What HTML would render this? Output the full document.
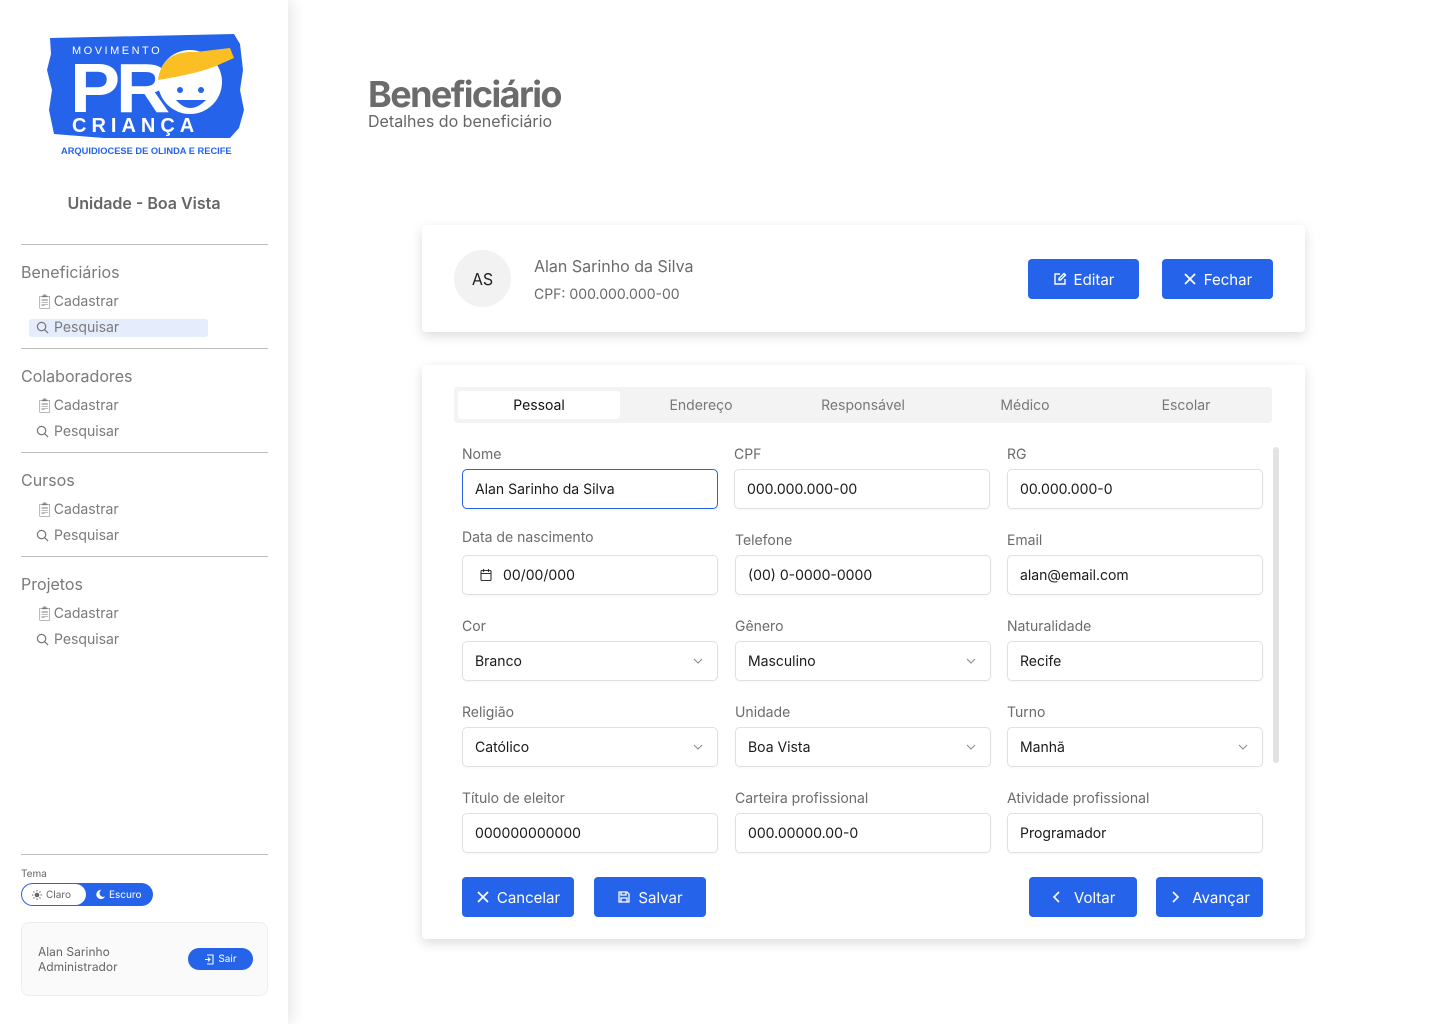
<!DOCTYPE html>
<html><head><meta charset="utf-8">
<style>
*{box-sizing:border-box;margin:0;padding:0}
body{width:1440px;height:1024px;position:relative;background:#fff;font-family:"Inter","Liberation Sans",sans-serif;overflow:hidden;color:#222}
.a{position:absolute}
#side{left:0;top:0;width:288px;height:1024px;background:#fff;box-shadow:4px 0 14px rgba(0,0,0,0.10)}
.hr{position:absolute;left:21px;width:247px;height:1px;background:#bdbdbd}
.sh{position:absolute;left:21px;font-size:16px;color:#7a7a7a}
.si{position:absolute;left:36px;font-size:14px;color:#7a7a7a;display:flex;align-items:center;gap:5px}
.card{position:absolute;background:#fff;border-radius:4px;box-shadow:0 4px 12px rgba(0,0,0,0.14)}
.btn{position:absolute;height:40px;background:#2563eb;color:#fff;border-radius:4px;font-size:15px;display:flex;align-items:center;justify-content:center;gap:7px}
.lbl{position:absolute;font-size:14px;color:#6b6b6b}
.inp{position:absolute;width:256px;height:40px;border:1px solid #e0e0e0;border-radius:5px;font-size:14px;color:#1a1a1a;padding-left:12px;display:flex;align-items:center;box-shadow:0 1px 2px rgba(0,0,0,0.04)}
.chev{position:absolute;right:14px;top:14px}
.tab{position:absolute;top:391px;height:28px;font-size:14px;color:#777;display:flex;align-items:center;justify-content:center;width:162px}
</style></head><body>
<div id="side" class="a">
  <svg class="a" style="left:44px;top:30px" width="202" height="130" viewBox="0 0 202 130">
    <path d="M6 8 L190 4 L196 14 L199 40 L196 60 L200 80 L195 98 L186 108 L60 108 L10 104 L5 80 L8 60 L3 40 L7 24 Z" fill="#2563eb"/>
    <text x="28" y="24" font-family="Liberation Sans" font-size="11" fill="#fff" letter-spacing="2.5">MOVIMENTO</text>
    <text x="26" y="82" font-family="Liberation Sans" font-weight="bold" font-size="70" fill="#fff" letter-spacing="-4" textLength="96" lengthAdjust="spacingAndGlyphs">PR</text>
    <circle cx="146" cy="52" r="32" fill="#fff"/>
    <path d="M114 50 Q118 20 152 22 L186 18 L190 28 L172 36 Q152 44 114 50Z" fill="#fbbf24"/>
    <circle cx="136" cy="60" r="3" fill="#2563eb"/><circle cx="157" cy="60" r="3" fill="#2563eb"/>
    <path d="M132 70 Q146 86 162 70 Z" fill="#2563eb"/>
    <text x="28" y="102" font-family="Liberation Sans" font-weight="bold" font-size="20" fill="#fff" letter-spacing="5">CRIANÇA</text>
    <text x="17" y="124" font-family="Liberation Sans" font-weight="bold" font-size="9.3" fill="#2563eb">ARQUIDIOCESE DE OLINDA E RECIFE</text>
  </svg>
  <div class="a" style="left:0;width:288px;top:193px;text-align:center;font-size:16px;font-weight:600;color:#666">Unidade - Boa Vista</div>
  <div class="hr" style="top:244px"></div>
  <div class="sh" style="top:262px">Beneficiários</div>
  <div class="si" style="top:293px">&#x1F4CB;&#xFE0E;Cadastrar</div>
  <div class="a" style="left:29px;top:319px;width:179px;height:18px;background:#e5ecfb;border-radius:3px"></div>
  <div class="si" style="top:319px"><svg width="13" height="13" viewBox="0 0 14 14"><circle cx="6" cy="6" r="4.5" fill="none" stroke="#777" stroke-width="1.3"/><path d="M9.5 9.5 L13 13" stroke="#777" stroke-width="1.3"/></svg>Pesquisar</div>
  <div class="hr" style="top:348px"></div>
  <div class="sh" style="top:366px">Colaboradores</div>
  <div class="si" style="top:397px">&#x1F4CB;&#xFE0E;Cadastrar</div>
  <div class="si" style="top:423px"><svg width="13" height="13" viewBox="0 0 14 14"><circle cx="6" cy="6" r="4.5" fill="none" stroke="#777" stroke-width="1.3"/><path d="M9.5 9.5 L13 13" stroke="#777" stroke-width="1.3"/></svg>Pesquisar</div>
  <div class="hr" style="top:452px"></div>
  <div class="sh" style="top:470px">Cursos</div>
  <div class="si" style="top:501px">&#x1F4CB;&#xFE0E;Cadastrar</div>
  <div class="si" style="top:527px"><svg width="13" height="13" viewBox="0 0 14 14"><circle cx="6" cy="6" r="4.5" fill="none" stroke="#777" stroke-width="1.3"/><path d="M9.5 9.5 L13 13" stroke="#777" stroke-width="1.3"/></svg>Pesquisar</div>
  <div class="hr" style="top:556px"></div>
  <div class="sh" style="top:574px">Projetos</div>
  <div class="si" style="top:605px">&#x1F4CB;&#xFE0E;Cadastrar</div>
  <div class="si" style="top:631px"><svg width="13" height="13" viewBox="0 0 14 14"><circle cx="6" cy="6" r="4.5" fill="none" stroke="#777" stroke-width="1.3"/><path d="M9.5 9.5 L13 13" stroke="#777" stroke-width="1.3"/></svg>Pesquisar</div>
  <div class="hr" style="top:854px"></div>
  <div class="a" style="left:21px;top:868px;font-size:10px;color:#666">Tema</div>
  <div class="a" style="left:21px;top:883px;width:132px;height:23px;border-radius:12px;background:#2563eb"></div>
  <div class="a" style="left:22px;top:884px;width:64px;height:21px;border-radius:11px;background:#fff;font-size:10px;color:#666;display:flex;align-items:center;padding-left:10px;gap:4px"><svg width="10" height="10" viewBox="0 0 10 10"><circle cx="5" cy="5" r="2.3" fill="#666"/><path d="M5 0v1.5M5 8.5V10M0 5h1.5M8.5 5H10M1.5 1.5l1 1M7.5 7.5l1 1M1.5 8.5l1-1M7.5 2.5l1-1" stroke="#666" stroke-width="1"/></svg>Claro</div>
  <div class="a" style="left:95px;top:884px;height:21px;font-size:10px;color:#fff;display:flex;align-items:center;gap:3px"><svg width="11" height="11" viewBox="0 0 12 12"><path d="M7 1A5 5 0 1 0 11 8 4 4 0 0 1 7 1Z" fill="#fff"/></svg>Escuro</div>
  <div class="a" style="left:21px;top:922px;width:247px;height:74px;border:1px solid #eee;border-radius:8px;background:#fafafa"></div>
  <div class="a" style="left:38px;top:944px;font-size:12px;color:#666;line-height:15px">Alan Sarinho<br>Administrador</div>
  <div class="a" style="left:188px;top:948px;width:65px;height:22px;border-radius:11px;background:#2563eb;color:#fff;font-size:10px;display:flex;align-items:center;justify-content:center;gap:4px"><svg width="10" height="11" viewBox="0 0 10 11" fill="none" stroke="#fff" stroke-width="1.1"><path d="M3 1h6v9H3M1 5.5h5M4 3.5l2 2-2 2"/></svg>Sair</div>
</div>

<div class="a" style="left:368px;top:72px;font-size:36px;font-weight:bold;color:#6b6b6b;letter-spacing:-1.6px">Beneficiário</div>
<div class="a" style="left:368px;top:111px;font-size:16px;color:#666">Detalhes do beneficiário</div>

<div class="card" style="left:422px;top:225px;width:883px;height:107px"></div>
<div class="a" style="left:454px;top:250px;width:57px;height:57px;border-radius:50%;background:#f2f2f2;display:flex;align-items:center;justify-content:center;font-size:16px;color:#222">AS</div>
<div class="a" style="left:534px;top:256px;font-size:16px;color:#6b6b6b">Alan Sarinho da Silva</div>
<div class="a" style="left:534px;top:286px;font-size:14px;color:#6b6b6b">CPF: 000.000.000-00</div>
<div class="btn" style="left:1028px;top:259px;width:111px"><svg width="14" height="14" viewBox="0 0 14 14" fill="none" stroke="#fff" stroke-width="1.4"><path d="M7 2H2v10h10V7"/><path d="M11 1.5l1.5 1.5-5 5H6V6.5z"/></svg>Editar</div>
<div class="btn" style="left:1162px;top:259px;width:111px"><svg width="14" height="14" viewBox="0 0 14 14" stroke="#fff" stroke-width="1.8"><path d="M2 2L12 12M12 2L2 12"/></svg>Fechar</div>

<div class="card" style="left:422px;top:365px;width:883px;height:574px"></div>
<div class="a" style="left:454px;top:387px;width:818px;height:36px;background:#f3f3f3;border-radius:4px"></div>
<div class="a" style="left:458px;top:391px;width:162px;height:28px;background:#fff;border-radius:3px"></div>
<div class="tab" style="left:458px;color:#111">Pessoal</div>
<div class="tab" style="left:620px">Endereço</div>
<div class="tab" style="left:782px">Responsável</div>
<div class="tab" style="left:944px">Médico</div>
<div class="tab" style="left:1105px">Escolar</div>
<div class="a" style="left:1273px;top:447px;width:6px;height:316px;border-radius:3px;background:#e3e3e3"></div>

<div class="lbl" style="left:462px;top:446px">Nome</div>
<div class="inp" style="left:462px;top:469px;border-color:#2563eb">Alan Sarinho da Silva</div>
<div class="lbl" style="left:734px;top:446px">CPF</div>
<div class="inp" style="left:734px;top:469px">000.000.000-00</div>
<div class="lbl" style="left:1007px;top:446px">RG</div>
<div class="inp" style="left:1007px;top:469px">00.000.000-0</div>

<div class="lbl" style="left:462px;top:529px">Data de nascimento</div>
<div class="inp" style="left:462px;top:555px;padding-left:16px"><svg width="14" height="14" viewBox="0 0 14 14" fill="none" stroke="#333" stroke-width="1.1" style="margin-right:10px"><rect x="2" y="2.5" width="10" height="10" rx="1"/><path d="M2 5.5h10M4.5 1v3M9.5 1v3"/></svg>00/00/000</div>
<div class="lbl" style="left:735px;top:532px">Telefone</div>
<div class="inp" style="left:735px;top:555px">(00) 0-0000-0000</div>
<div class="lbl" style="left:1007px;top:532px">Email</div>
<div class="inp" style="left:1007px;top:555px">alan@email.com</div>

<div class="lbl" style="left:462px;top:618px">Cor</div>
<div class="inp" style="left:462px;top:641px">Branco<svg class="chev" width="10" height="10" viewBox="0 0 10 10"><path d="M1 3l4 4 4-4" fill="none" stroke="#888"/></svg></div>
<div class="lbl" style="left:735px;top:618px">Gênero</div>
<div class="inp" style="left:735px;top:641px">Masculino<svg class="chev" width="10" height="10" viewBox="0 0 10 10"><path d="M1 3l4 4 4-4" fill="none" stroke="#888"/></svg></div>
<div class="lbl" style="left:1007px;top:618px">Naturalidade</div>
<div class="inp" style="left:1007px;top:641px">Recife</div>

<div class="lbl" style="left:462px;top:704px">Religião</div>
<div class="inp" style="left:462px;top:727px">Católico<svg class="chev" width="10" height="10" viewBox="0 0 10 10"><path d="M1 3l4 4 4-4" fill="none" stroke="#888"/></svg></div>
<div class="lbl" style="left:735px;top:704px">Unidade</div>
<div class="inp" style="left:735px;top:727px">Boa Vista<svg class="chev" width="10" height="10" viewBox="0 0 10 10"><path d="M1 3l4 4 4-4" fill="none" stroke="#888"/></svg></div>
<div class="lbl" style="left:1007px;top:704px">Turno</div>
<div class="inp" style="left:1007px;top:727px">Manhã<svg class="chev" width="10" height="10" viewBox="0 0 10 10"><path d="M1 3l4 4 4-4" fill="none" stroke="#888"/></svg></div>

<div class="lbl" style="left:462px;top:790px">Título de eleitor</div>
<div class="inp" style="left:462px;top:813px">000000000000</div>
<div class="lbl" style="left:735px;top:790px">Carteira profissional</div>
<div class="inp" style="left:735px;top:813px">000.00000.00-0</div>
<div class="lbl" style="left:1007px;top:790px">Atividade profissional</div>
<div class="inp" style="left:1007px;top:813px">Programador</div>

<div class="btn" style="left:462px;top:877px;width:112px"><svg width="14" height="14" viewBox="0 0 14 14" stroke="#fff" stroke-width="1.8"><path d="M2 2L12 12M12 2L2 12"/></svg>Cancelar</div>
<div class="btn" style="left:594px;top:877px;width:112px"><svg width="14" height="14" viewBox="0 0 14 14" fill="none" stroke="#fff" stroke-width="1.3"><path d="M2 2h8l2 2v8H2z"/><path d="M4 2v3h5V2M4 12V8h6v4"/></svg>Salvar</div>
<div class="btn" style="left:1029px;top:877px;width:108px"><svg width="12" height="12" viewBox="0 0 12 12" fill="none" stroke="#fff" stroke-width="1.6"><path d="M8 1L3 6l5 5"/></svg>&nbsp;Voltar</div>
<div class="btn" style="left:1156px;top:877px;width:107px"><svg width="12" height="12" viewBox="0 0 12 12" fill="none" stroke="#fff" stroke-width="1.6"><path d="M4 1l5 5-5 5"/></svg>&nbsp;Avançar</div>
</body></html>
